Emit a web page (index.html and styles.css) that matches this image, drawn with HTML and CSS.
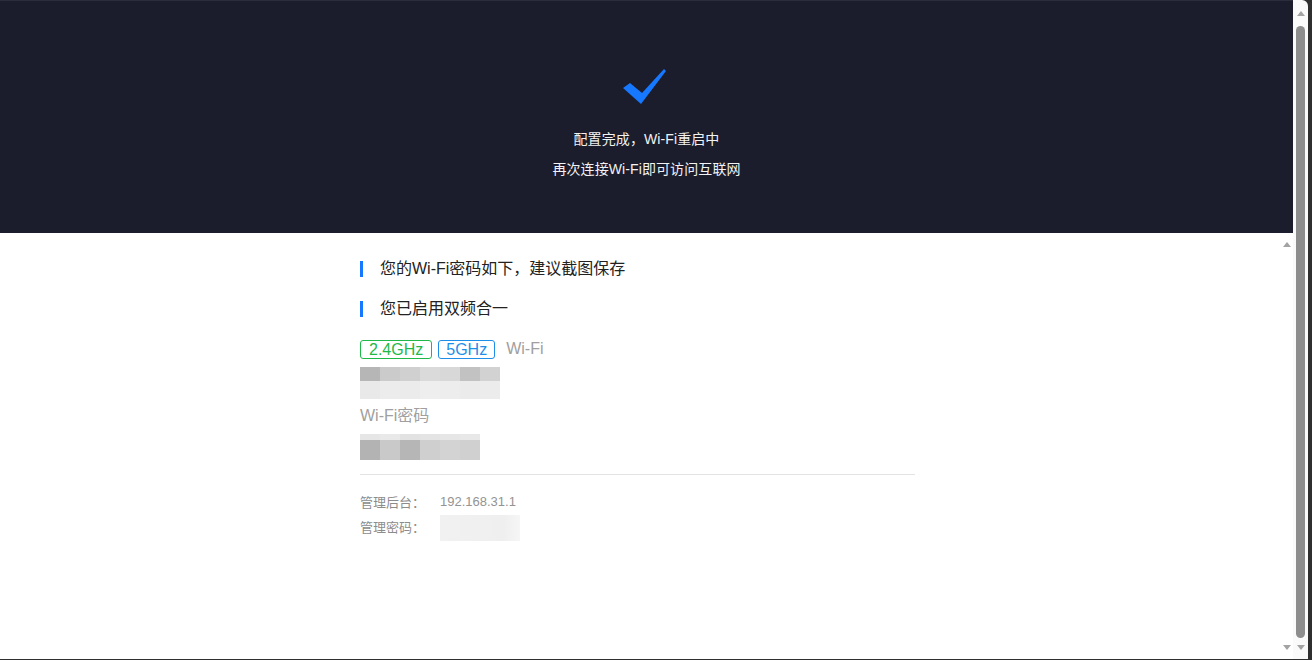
FILE: index.html
```html
<!DOCTYPE html>
<html lang="zh-CN">
<head>
<meta charset="utf-8">
<title>配置完成</title>
<link rel="stylesheet" href="styles.css">
</head>
<body>
<div class="window">
  <div class="viewport">
    <div class="main">
      <header class="hero">
        <svg class="check" width="44" height="36" viewBox="0 0 44 36">
          <polygon points="0,20 7,15 19,25 41,1 43,3 18,36" fill="#1677ff"/>
        </svg>
        <p class="hero-line">配置完成，Wi-Fi重启中</p>
        <p class="hero-line">再次连接Wi-Fi即可访问互联网</p>
      </header>
      <div class="body-area">
        <div class="content">
          <div class="content-inner">
            <div class="section-title"><span class="bar"></span><span>您的Wi-Fi密码如下，建议截图保存</span></div>
            <div class="section-title second"><span class="bar"></span><span>您已启用双频合一</span></div>
            <div class="tags">
              <span class="tag green">2.4GHz</span>
              <span class="tag blue">5GHz</span>
              <span class="tag-label">Wi-Fi</span>
            </div>
            <div class="mosaic m1">
              <i style="background:#b6b6b6"></i><i style="background:#cbcbcb"></i><i style="background:#d0d0d0"></i><i style="background:#dadada"></i><i style="background:#d8d8d8"></i><i style="background:#c2c2c2"></i><i style="background:#d2d2d2"></i>
              <i style="background:#e9e9e9"></i><i style="background:#ececec"></i><i style="background:#ebebeb"></i><i style="background:#eeeeee"></i><i style="background:#ededed"></i><i style="background:#ebebeb"></i><i style="background:#ececec"></i>
            </div>
            <div class="field-label">Wi-Fi密码</div>
            <div class="mosaic m2">
              <i style="background:#e6e6e6"></i><i style="background:#e9e9e9"></i><i style="background:#e2e2e2"></i><i style="background:#e4e4e4"></i><i style="background:#e6e6e6"></i><i style="background:#e8e8e8"></i>
              <i style="background:#b3b3b3"></i><i style="background:#c9c9c9"></i><i style="background:#b6b6b6"></i><i style="background:#cfcfcf"></i><i style="background:#d3d3d3"></i><i style="background:#d0d0d0"></i>
            </div>
            <div class="divider"></div>
            <div class="admin">
              <div class="admin-row"><span class="admin-key">管理后台：</span><span class="admin-val">192.168.31.1</span></div>
              <div class="admin-row"><span class="admin-key">管理密码：</span><span class="admin-blur"></span></div>
            </div>
          </div>
        </div>
        <div class="inner-scroll">
          <span class="arrow up"></span>
          <span class="arrow down"></span>
        </div>
      </div>
    </div>
    <div class="outer-scroll">
      <span class="arrow up"></span>
      <span class="thumb"></span>
      <span class="arrow down"></span>
    </div>
    <div class="frame-right"></div>
  </div>
  <div class="frame-bottom"></div>
</div>
</body>
</html>
```
FILE: styles.css
```css
html, body {
  margin: 0;
  padding: 0;
  width: 1312px;
  height: 660px;
  overflow: hidden;
  background: #2f2f2f;
}
body {
  font-family: "Liberation Sans", "Noto Sans CJK SC", sans-serif;
}
.window {
  display: flex;
  flex-direction: column;
  width: 1312px;
  height: 660px;
}
.viewport {
  display: flex;
  flex: 1;
  min-height: 0;
}
.main {
  width: 1293px;
  display: flex;
  flex-direction: column;
  background: #fff;
}
.hero {
  height: 233px;
  background: #1b1c2c;
  border-top: 1px solid #2c2d3c;
  box-sizing: border-box;
  display: flex;
  flex-direction: column;
  align-items: center;
  padding-top: 67px;
}
.check {
  display: block;
  margin-right: 4px;
}
.hero-line {
  margin: 0;
  color: #f2f2f2;
  font-size: 14px;
  line-height: 30px;
  letter-spacing: 0.1px;
}
.hero-line:first-of-type {
  margin-top: 20px;
}
.body-area {
  flex: 1;
  display: flex;
  min-height: 0;
}
.content {
  flex: 1;
}
.content-inner {
  width: 555px;
  margin-left: 360px;
  padding-top: 24px;
  color: #333;
}
.section-title {
  display: flex;
  align-items: center;
  gap: 17px;
  font-size: 16px;
  line-height: 24px;
  color: #222;
}
.section-title.second {
  margin-top: 16px;
}
.bar {
  width: 3px;
  height: 16px;
  background: #1677ff;
}
.tags {
  display: flex;
  align-items: center;
  margin-top: 16px;
  height: 24px;
  font-size: 16px;
}
.tag {
  box-sizing: border-box;
  height: 19px;
  line-height: 17px;
  padding: 0 8px;
  border: 1px solid;
  border-radius: 3px;
  margin-right: 6px;
}
.tag.blue {
  padding: 0 7px;
}
.tag.green {
  color: #1fb949;
  border-color: #1fb949;
}
.tag.blue {
  color: #1e8fe8;
  border-color: #1e8fe8;
}
.tag-label {
  color: #a0a0a0;
  margin-left: 5px;
}
.mosaic {
  display: grid;
  grid-template-columns: repeat(7, 20px);
  grid-template-rows: 14px 18px;
  width: 140px;
  margin-top: 6px;
}
.mosaic i {
  display: block;
}
.mosaic.m2 {
  grid-template-columns: repeat(6, 20px);
  grid-template-rows: 6px 20px;
  width: 120px;
  margin-top: 6px;
}
.field-label {
  margin-top: 5px;
  font-size: 16px;
  line-height: 24px;
  color: #a0a0a0;
}
.divider {
  margin-top: 14px;
  height: 1px;
  background: #e4e4e4;
}
.admin {
  margin-top: 14px;
  font-size: 13px;
  color: #8c8c8c;
}
.admin-row {
  display: flex;
  align-items: center;
  height: 25px;
}
.admin-key {
  width: 80px;
}
.admin-val {
  color: #939393;
}
.admin-blur {
  width: 80px;
  height: 26px;
  margin-top: 2px;
  background: linear-gradient(90deg, #f1f1f1, #efefef 80%, #f6f6f6);
}
.inner-scroll {
  width: 13px;
  background: #fff;
  display: flex;
  flex-direction: column;
  justify-content: space-between;
  align-items: center;
  padding: 9px 0 9px;
}
.arrow {
  width: 0;
  height: 0;
  border-left: 4px solid transparent;
  border-right: 4px solid transparent;
}
.arrow.up {
  border-bottom: 5px solid #a3a3a3;
}
.arrow.down {
  border-top: 5px solid #a3a3a3;
}
.outer-scroll {
  width: 15px;
  background: #fafafa;
  border-top-right-radius: 6px;
  display: flex;
  flex-direction: column;
  align-items: center;
  padding: 11px 0 9px;
  box-sizing: border-box;
}
.thumb {
  width: 9px;
  flex: 1;
  margin: 10px 0 7px;
  background: #8d8d8d;
  border-radius: 5px;
}
.frame-right {
  width: 4px;
  background: #2f2f2f;
}
.frame-bottom {
  height: 1px;
  background: #2f2f2f;
}
```
